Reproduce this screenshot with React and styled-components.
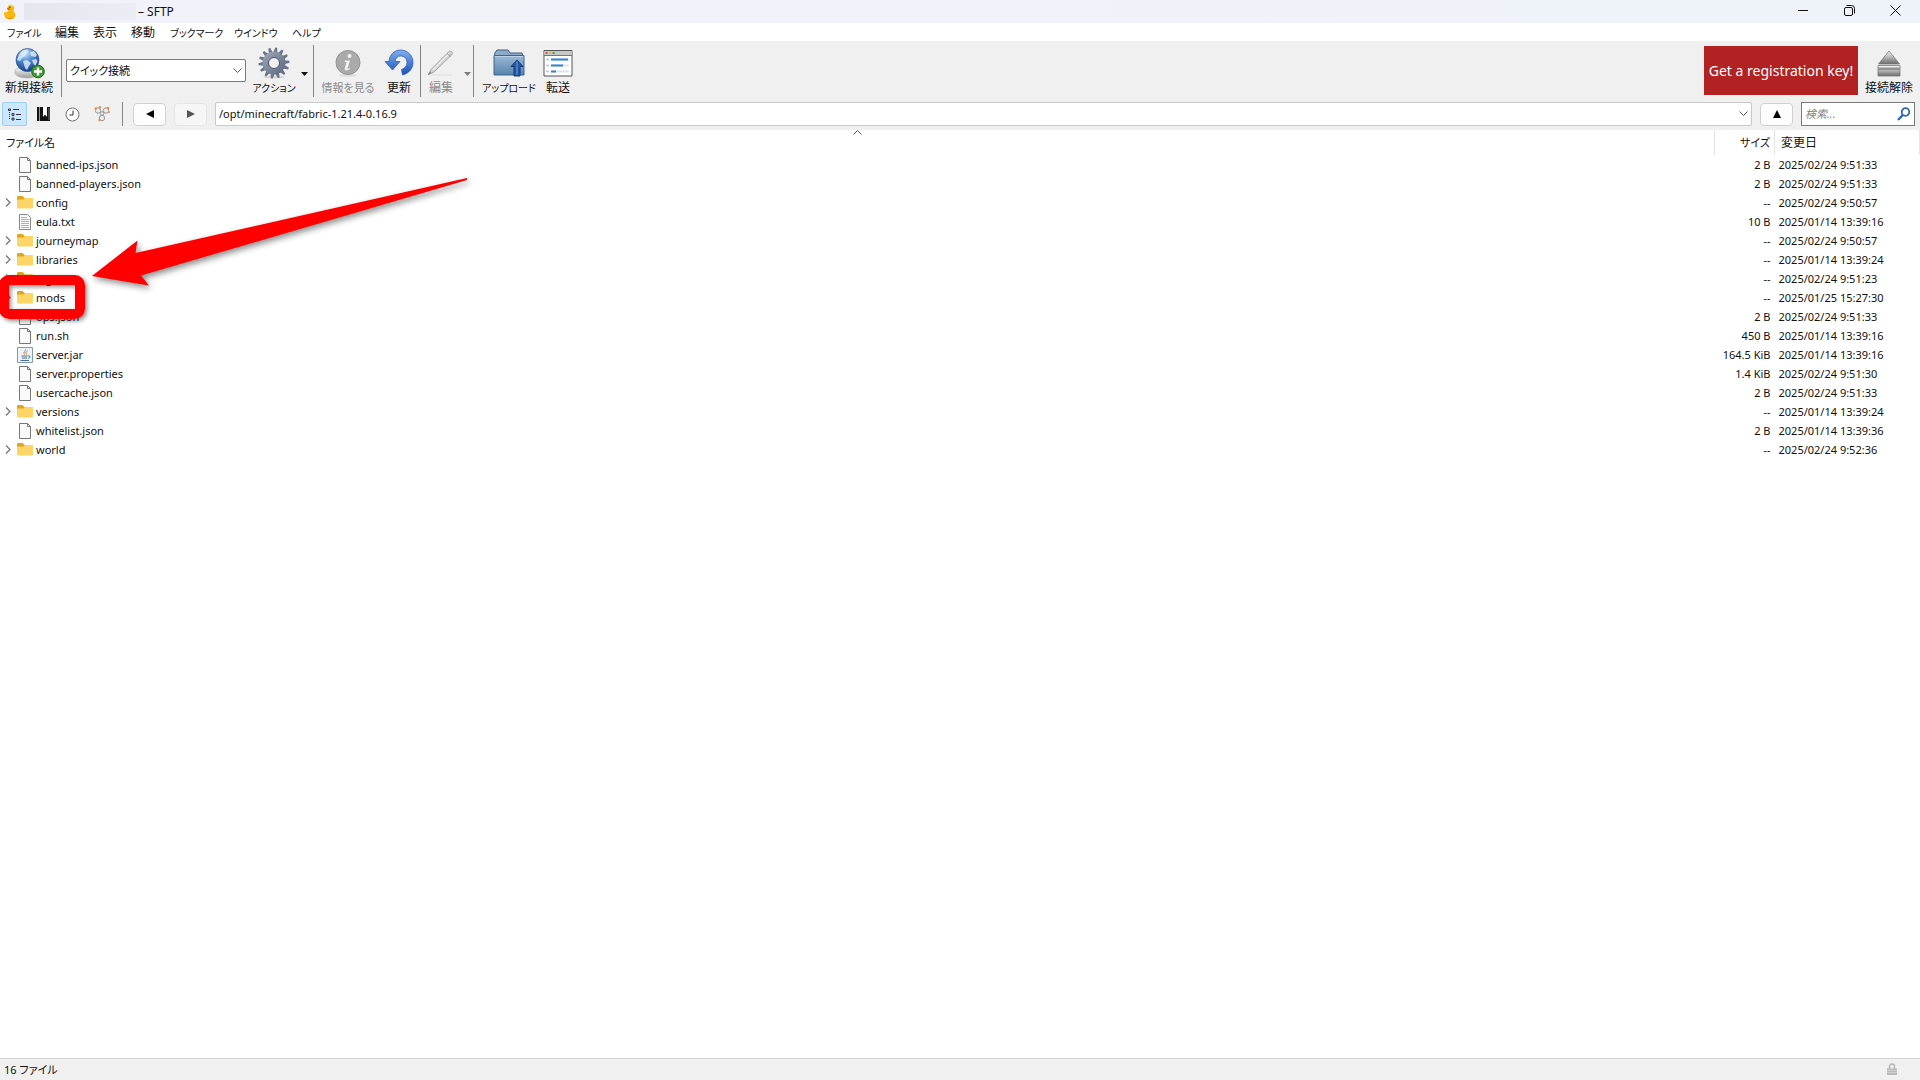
import React from "react";
import styled, { createGlobalStyle } from "styled-components";

const Global = createGlobalStyle`
  *, *::before, *::after { box-sizing: border-box; }
  body { margin: 0; background: #fff; color: #111; }
  body, button, select, input {
    font-family: "Noto Sans", "Noto Sans CJK JP", sans-serif;
    font-size: 12px;
    line-height: 16px;
    font-feature-settings: "palt";
  }
  button, select, input { margin: 0; color: inherit; }
  svg { display: block; flex: none; }
`;

const Window = styled.div`
  display: flex;
  flex-direction: column;
  min-height: 100vh;
`;

const TitleBar = styled.header`
  display: flex;
  align-items: center;
  height: 23px;
  padding: 0 2px 0 4px;
  background: linear-gradient(90deg, #f2f3fa, #eef3f9);
`;
const HiddenHost = styled.span`
  width: 112px;
  height: 17px;
  margin: 0 2px 0 8px;
  background: linear-gradient(90deg, #e5e6ee, #ebedf5);
`;
const Title = styled.h1`
  flex: 1;
  margin: 0;
  font-size: 12px;
  font-weight: 400;
`;
const WindowButton = styled.button`
  display: grid;
  place-items: center;
  width: 46px;
  height: 20px;
  padding: 0;
  border: 0;
  background: none;
  align-self: flex-start;
`;

const MenuBar = styled.nav`
  display: grid;
  grid-template-columns: 48px 38px 38px 39px 64px 58px 48px;
  height: 18px;
  padding: 2px 0 0 7px;
  background: #fff;
`;
const MenuItem = styled.button`
  padding: 0;
  border: 0;
  background: none;
  text-align: left;
  white-space: nowrap;
  font-size: ${(p) => (p.$kana ? "10px" : "12px")};
`;

const Gap = styled.span`
  width: 4px;
  flex: none;
`;
const Spacer = styled.span`
  flex: 1;
`;
const Divider = styled.span`
  width: 1px;
  height: ${(p) => p.$height}px;
  background: #858585;
  flex: none;
`;

const Toolbar = styled.div`
  display: flex;
  align-items: center;
  height: 61px;
  padding: 0 4px 2px 1px;
  background: #f0f0f0;
`;
const Tool = styled.button`
  display: grid;
  grid-template-rows: 34px 16px;
  justify-items: center;
  align-items: center;
  width: ${(p) => p.$width}px;
  padding: 0;
  border: 0;
  background: none;
  white-space: nowrap;
  font-size: ${(p) => p.$size || 12}px;
  &:disabled { color: #8b8b8b; }
`;
const CaretButton = styled.button`
  width: ${(p) => p.$width}px;
  padding: 6px 0 0;
  border: 0;
  background: none;
  display: grid;
  place-items: center;
  &:disabled { color: #7d7d7d; }
`;
const Register = styled.button`
  width: 154px;
  height: 49px;
  padding: 0;
  border: 0;
  margin-right: 4px;
  background: #b22222;
  color: #fff;
  font-size: 14px;
  white-space: nowrap;
`;

const Combo = styled.div`
  display: grid;
  align-items: center;
  flex: ${(p) => (p.$grow ? "1" : "0 0 180px")};
  min-width: 0;
  height: ${(p) => (p.$grow ? "24px" : "23px")};
  margin: ${(p) => (p.$grow ? "0 8px" : "0 2px 0 4px")};
  select, svg { grid-area: 1 / 1; }
  svg { justify-self: end; margin-right: 4px; pointer-events: none; }
`;
const Select = styled.select`
  appearance: none;
  width: 100%;
  height: 100%;
  padding: 0 18px 0 3px;
  border: 1px solid ${(p) => p.$edge};
  border-radius: 2px;
  background: #fff;
  font-size: 11px;
`;

const NavBar = styled.div`
  display: flex;
  align-items: center;
  height: 28px;
  padding: 0 5px 4px 2px;
  background: #f0f0f0;
`;
const ViewButton = styled.button`
  display: grid;
  place-items: center;
  width: 25px;
  height: 24px;
  padding: 0;
  margin-right: 4px;
  border: 1px solid ${(p) => (p.$on ? "#99d1ff" : "transparent")};
  border-radius: 2px;
  background: ${(p) => (p.$on ? "#cce8ff" : "none")};
`;
const HistoryGroup = styled.div`
  display: flex;
  margin-left: 10px;
`;
const HistoryButton = styled.button`
  display: grid;
  place-items: center;
  width: 33px;
  height: 23px;
  padding: 0;
  border: 1px solid ${(p) => (p.disabled ? "#e6e6e6" : "#d0d0d0")};
  border-radius: 4px;
  background: ${(p) => (p.disabled ? "#f6f6f6" : "#fdfdfd")};
  color: #000;
  flex: none;
  &:disabled { color: #555; }
  & + & { margin-left: 8px; }
`;
const Search = styled.label`
  display: flex;
  align-items: center;
  width: 114px;
  height: 24px;
  margin-left: 8px;
  padding: 0 3px;
  border: 1px solid #7a7a7a;
  background: #fff;
  flex: none;
`;
const SearchInput = styled.input`
  flex: 1;
  min-width: 0;
  padding: 0;
  border: 0;
  outline: 0;
  background: none;
  font-size: 11px;
  &::placeholder { color: #858585; font-style: italic; opacity: 1; }
`;

const Browser = styled.main`
  position: relative;
  flex: 1;
  overflow: hidden;
  background: #fff;
`;
const Files = styled.table`
  width: 100%;
  border-collapse: collapse;
  table-layout: fixed;
`;
const Head = styled.th`
  width: ${(p) => p.$width};
  height: 25px;
  padding: ${(p) => p.$pad};
  border-right: 1px solid #e4e4e4;
  font-weight: 400;
  font-size: ${(p) => (p.$kana ? "11px" : "12px")};
  text-align: ${(p) => p.$align || "left"};
`;
const Cell = styled.td`
  height: 19px;
  padding: ${(p) => p.$pad};
  font-size: 11px;
  line-height: 19px;
  white-space: nowrap;
  text-align: ${(p) => p.$align || "left"};
`;
const Entry = styled.div`
  display: grid;
  grid-template-columns: 16px 17px 1fr;
  align-items: center;
  column-gap: 1px;
  height: 19px;
  span { padding-left: 1px; }
`;
const Expander = styled.button`
  grid-column: 1;
  display: grid;
  width: 16px;
  height: 16px;
  place-items: center start;
  padding: 0 0 0 5px;
  border: 0;
  background: none;
`;
const SortMark = styled.svg`
  position: absolute;
  top: 0;
  left: calc((100% - 215px) / 2);
`;

const Arrow = styled.svg`
  position: absolute;
  left: 80px;
  top: 30px;
  filter: drop-shadow(2px 3px 3px rgba(0, 0, 0, 0.45));
  pointer-events: none;
`;
const Highlight = styled.div`
  position: absolute;
  left: -1px;
  top: 145px;
  width: 86px;
  height: 44px;
  border: 10px solid #fe0000;
  border-radius: 10px;
  box-shadow: 2px 2px 4px rgba(0, 0, 0, 0.45), inset 2px 2px 4px rgba(0, 0, 0, 0.45);
  pointer-events: none;
`;

const StatusBar = styled.footer`
  display: flex;
  align-items: center;
  justify-content: space-between;
  height: 22px;
  padding: 0 22px 0 4px;
  border-top: 1px solid #d5d5d5;
  background: #f0f0f0;
  font-size: 11px;
`;

const Duck = () => (
  <svg width="12" height="16" viewBox="0 0 12 16">
    <path d="M.3 7.500C0 10 .2 12.500 1.500 14c1.800 1.800 6.500 1.800 8.500.2 2-1.700 2-4.500.3-6-.9-.8-1-1.400-.5-2.300C11.200 3.300 9.500.4 6.900.4 4.700.4 3.300 2.200 3.800 4.300c.3 1.200.8 1.900.3 3-.8 1.300-2.600 1.400-3.800.2z" fill="#f7b90f" />
    <path d="M1 12.500c1.500 2 5.500 2.200 8 .2-.8 2.800-6 3.300-8-.2z" fill="#d98d07" />
    <path d="M6 1.300c1.500-.6 3 .2 3.300 1.500-1-.6-2.200-.7-3.300-.3z" fill="#ffe87a" />
    <path d="M3.900 3.600l-1 1.400 1.200.9 2.400-.6z" fill="#e4571b" />
    <circle cx="6" cy="3.300" r=".7" fill="#222" />
  </svg>
);

const Globe = () => (
  <svg width="32" height="32" viewBox="0 0 32 32">
    <defs>
      <radialGradient id="globe" cx=".4" cy=".2" r=".8">
        <stop offset="0" stopColor="#d7e9fb" />
        <stop offset=".4" stopColor="#5b95d8" />
        <stop offset="1" stopColor="#123f8c" />
      </radialGradient>
      <linearGradient id="base" x2="0" y2="1">
        <stop offset="0" stopColor="#fff" />
        <stop offset="1" stopColor="#9c9c9c" />
      </linearGradient>
    </defs>
    <path d="M3 22c-4 5 2 9 11 9 8 0 14-3 12-7l-5-4-14 0z" fill="url(#base)" stroke="#aaa" strokeWidth=".6" />
    <circle cx="14.500" cy="13" r="11.500" fill="url(#globe)" stroke="#31548c" strokeWidth=".7" />
    <path d="M6 8l3-4 5-1.500 2 2-3 1.500-1 3-3 2-2 3-3-1zM17 5l4-1 3 4-2 2-4-1zM10 14l4-1 4 3-2 3-2 4-2-2zM19 13l4-1 1.500 2-2 5-2-2z" fill="#e4effb" opacity=".8" />
    <circle cx="25" cy="24.500" r="6.300" fill="#3f9a35" stroke="#226a1c" />
    <path d="M25 20.500v8M21 24.500h8" stroke="#fff" strokeWidth="2.400" />
  </svg>
);

const Gear = () => (
  <svg width="32" height="32" viewBox="0 0 32 32">
    <defs>
      <linearGradient id="gear" x2="1" y2="1">
        <stop offset="0" stopColor="#a0a9b9" />
        <stop offset="1" stopColor="#5b667c" />
      </linearGradient>
    </defs>
    <ellipse cx="16" cy="30" rx="11" ry="1.500" fill="#d6d6d6" />
    {Array.from({ length: 14 }, (_, i) => (
      <path key={i} d="M14 6L15 .5h2L18 6z" transform={`rotate(${(i * 360) / 14 + 8} 16 16)`} fill="#69748a" />
    ))}
    <path fillRule="evenodd" d="M16 4.500a11.500 11.500 0 100 23 11.500 11.500 0 000-23zm0 6a5.500 5.500 0 110 11 5.500 5.500 0 010-11z" fill="url(#gear)" />
    <circle cx="16" cy="16" r="5.500" fill="none" stroke="#48536a" strokeWidth="1" />
  </svg>
);

const Info = () => (
  <svg width="28" height="28" viewBox="0 0 28 28">
    <ellipse cx="14" cy="26.500" rx="9" ry="1.300" fill="#ddd" />
    <circle cx="14" cy="13.500" r="12" fill="#aaa" stroke="#929292" />
    <circle cx="15.500" cy="7" r="2" fill="#f1f1f1" />
    <path d="M11 11.500h5l-2.300 7.500c-.2 1 .8.800 2.300-.3v1c-2 2-5.800 2.500-5.300-.2l1.800-6.200-2-.3z" fill="#f1f1f1" />
  </svg>
);

const Refresh = () => (
  <svg width="30" height="28" viewBox="0 0 30 28">
    <defs>
      <linearGradient id="refresh" x2="0" y2="1">
        <stop offset="0" stopColor="#7fb0f3" />
        <stop offset="1" stopColor="#1a4fb4" />
      </linearGradient>
    </defs>
    <path d="M1 12.500h4C5.500 5.500 10.500 1 16.500 1 23.500 1 29 6.500 29 13.500c0 6-4 11-10.500 12.500l-1-5.500c3.500-1 5.500-3.700 5.500-7 0-4-2.800-6.500-6.500-6.500-3 0-5 2-5.500 5.500h5L8.500 21z" fill="url(#refresh)" stroke="#2b5fb9" strokeWidth=".8" />
  </svg>
);

const Pencil = () => (
  <svg width="28" height="28" viewBox="0 0 28 28">
    <path d="M3 26h22" stroke="#ddd" />
    <path d="M1.500 25.500l2.500-5L22 2.500c1.500-1.500 4.500 1 3 3L7 23z" fill="#d0d0d0" stroke="#a6a6a6" />
    <path d="M6 21L22 4.500" stroke="#f0f0f0" strokeWidth="1.300" />
    <path d="M1.500 25.500l1.200-2.400 1.200 1z" stroke="#888" fill="#888" />
    <path d="M20 4.500l3.300 3" stroke="#999" />
  </svg>
);

const Upload = () => (
  <svg width="32" height="28" viewBox="0 0 32 28">
    <defs>
      <linearGradient id="folderBlue" x2="0" y2="1">
        <stop offset="0" stopColor="#9ab9d5" />
        <stop offset="1" stopColor="#5883ad" />
      </linearGradient>
    </defs>
    <path d="M1.500 8L2 3.500 4 1h11l2 3h12l1 4z" fill="#8eacc9" stroke="#3d5e80" />
    <path d="M1 6.500h30V26H1z" fill="url(#folderBlue)" stroke="#41658a" />
    <path d="M2 7.500h28" stroke="#bdd3e7" />
    <path d="M24 11l6 6.500h-3V27h-6v-9.500h-3z" fill="#2458a6" stroke="#153b78" />
    <path d="M24 12.500v13" stroke="#6f9ddb" />
  </svg>
);

const Transfer = () => (
  <svg width="30" height="28" viewBox="0 0 30 28">
    <path d="M1 1.500h28V27H1z" fill="#fff" stroke="#555" />
    <path d="M1.500 2h27v4.500h-27z" fill="#c7c7c7" />
    <path d="M1 6.500h28" stroke="#777" />
    <path d="M2.500 3h2v2h-2z" fill="#e2574c" />
    <path d="M6 3h2v2H6z" fill="#e7b43c" />
    <path d="M9.500 3h2v2h-2z" fill="#25a86b" />
    <path d="M3 10.500h3M3 16.500h3M3 22.500h3" stroke="#b9c4d0" strokeWidth="1.500" />
    <path d="M8 10.500h18M8 16.500h18M8 22.500h18" stroke="#dce3ea" strokeWidth="2" />
    <path d="M8 10.500h17M8 16.500h12M8 22.500h5" stroke="#2e86d6" strokeWidth="2" />
  </svg>
);

const Eject = () => (
  <svg width="24" height="28" viewBox="0 0 24 28">
    <defs>
      <linearGradient id="eject" x2="0" y2="1">
        <stop offset="0" stopColor="#fafafa" />
        <stop offset="1" stopColor="#6a6a6a" />
      </linearGradient>
    </defs>
    <path d="M12 2L22.500 15h-21z" fill="url(#eject)" stroke="#777" strokeWidth=".8" />
    <path d="M1 16.500h22V27H1z" fill="url(#eject)" stroke="#777" strokeWidth=".8" />
    <path d="M1.500 18.500h21v2.500h-21z" fill="#6c6c6c" opacity=".6" />
  </svg>
);

const Caret = () => (
  <svg width="7" height="4" viewBox="0 0 7 4"><path d="M0 0h7L3.500 4z" fill="currentColor" /></svg>
);
const Chevron = () => (
  <svg width="9" height="6" viewBox="0 0 9 6"><path d="M.5.5l4 4 4-4" fill="none" stroke="#555" /></svg>
);

const Outline = () => (
  <svg width="14" height="13" viewBox="0 0 14 13" fill="none" stroke="#333">
    <path d="M.5 1h2v1.500h-2zM4 5.500h2v2H4zM4 10h2v2H4zM5 1.500h6M8 6.500h5M8 11.500h5" />
    <path d="M1.500 4v8" strokeDasharray="1 1" />
  </svg>
);
const Book = () => (
  <svg width="13" height="14" viewBox="0 0 13 14">
    <path d="M0 0h13v14H0z" fill="#111" />
    <path d="M2.500 0v14" stroke="#999" />
    <path d="M6 0h4v10L8 7.500 6 10z" fill="#fff" />
    <path d="M12 1v12" stroke="#777" />
  </svg>
);
const Clock = () => (
  <svg width="15" height="15" viewBox="0 0 15 15">
    <circle cx="7.500" cy="7.500" r="6.500" fill="#fff" stroke="#707070" />
    <path d="M8 3.500v4.500H4.500" fill="none" stroke="#333" />
  </svg>
);
const Bonjour = () => (
  <svg width="16" height="16" viewBox="0 0 16 16">
    <g fill="#ececec" stroke="#999" strokeWidth="1">
      <circle cx="4" cy="4.500" r="2.700" /><circle cx="12" cy="4.500" r="2.700" /><circle cx="8" cy="12" r="2.700" />
      <circle cx="8" cy="7.500" r="1.800" />
    </g>
    <g fill="#f08a4b">
      <circle cx="1.800" cy="2.500" r="1.300" /><circle cx="6" cy="1.300" r="1.200" /><circle cx="14" cy="2" r="1.300" />
      <circle cx="15" cy="6" r="1" /><circle cx="5.500" cy="14" r="1.200" />
    </g>
  </svg>
);
const Magnifier = () => (
  <svg width="14" height="14" viewBox="0 0 14 14" fill="none" stroke="#2b68b4">
    <circle cx="8.500" cy="5" r="3.800" strokeWidth="1.800" />
    <path d="M5.800 8L1 13" strokeWidth="2.400" />
  </svg>
);

const icons = {
  folder: (
    <svg width="16" height="14" viewBox="0 0 16 14">
      <path d="M0 1.500C0 .5.500 0 1.500 0h4L7.500 2H15c.7 0 1 .4 1 1v4H0z" fill="#e2a41c" />
      <path d="M0 4.500c0-.6.4-1 1-1h5.500L8 2h7c.7 0 1 .4 1 1v8.500c0 .7-.4 1-1 1H1c-.6 0-1-.3-1-1z" fill="#fbd565" />
    </svg>
  ),
  file: (
    <svg width="16" height="16" viewBox="0 0 16 16">
      <path d="M2.500.5h8l3 3v12h-11z" fill="#fafafa" stroke="#777" />
      <path d="M10.500.5v3h3" fill="none" stroke="#777" />
    </svg>
  ),
  text: (
    <svg width="16" height="16" viewBox="0 0 16 16">
      <path d="M2.500.5h8l3 3v12h-11z" fill="#fafafa" stroke="#888" />
      <path d="M4 3.500h6M4 5.500h8M4 7.500h8M4 9.500h8M4 11.500h8M4 13.500h8" stroke="#b0b0b0" />
    </svg>
  ),
  jar: (
    <svg width="16" height="16" viewBox="0 0 16 16">
      <path d="M.5.5h15v15H.5z" fill="#edf3f8" stroke="#7e9bb5" />
      <path d="M8.500 2c1 2-3 3-1 5.500M10.500 4c-2.500 1.500-1.500 2-1 3.500" fill="none" stroke="#e0702a" />
      <path d="M4.500 9h6M5 11h5M3.500 13.500h8.500M11 9c3-.5 2.500 2 .3 2.300" fill="none" stroke="#476f97" />
    </svg>
  ),
};

const files = [
  ["file", "banned-ips.json", "2 B", "2025/02/24 9:51:33"],
  ["file", "banned-players.json", "2 B", "2025/02/24 9:51:33"],
  ["folder", "config", "--", "2025/02/24 9:50:57"],
  ["text", "eula.txt", "10 B", "2025/01/14 13:39:16"],
  ["folder", "journeymap", "--", "2025/02/24 9:50:57"],
  ["folder", "libraries", "--", "2025/01/14 13:39:24"],
  ["folder", "logs", "--", "2025/02/24 9:51:23"],
  ["folder", "mods", "--", "2025/01/25 15:27:30"],
  ["file", "ops.json", "2 B", "2025/02/24 9:51:33"],
  ["file", "run.sh", "450 B", "2025/01/14 13:39:16"],
  ["jar", "server.jar", "164.5 KiB", "2025/01/14 13:39:16"],
  ["file", "server.properties", "1.4 KiB", "2025/02/24 9:51:30"],
  ["file", "usercache.json", "2 B", "2025/02/24 9:51:33"],
  ["folder", "versions", "--", "2025/01/14 13:39:24"],
  ["file", "whitelist.json", "2 B", "2025/01/14 13:39:36"],
  ["folder", "world", "--", "2025/02/24 9:52:36"],
];

const menus = [
  ["ファイル", true], ["編集", false], ["表示", false], ["移動", false],
  ["ブックマーク", true], ["ウインドウ", true], ["ヘルプ", true],
];

export default function App() {
  return (
    <Window>
      <Global />
      <TitleBar>
        <Duck />
        <HiddenHost />
        <Title>– SFTP</Title>
        <WindowButton aria-label="最小化">
          <svg width="10" height="10" viewBox="0 0 10 10"><path d="M0 5.500h10" stroke="#111" /></svg>
        </WindowButton>
        <WindowButton aria-label="元に戻す">
          <svg width="11" height="11" viewBox="0 0 11 11" fill="none" stroke="#111">
            <rect x=".5" y="2.500" width="8" height="8" rx="1.500" />
            <path d="M2.500.5h5a3 3 0 013 3v5" />
          </svg>
        </WindowButton>
        <WindowButton aria-label="閉じる">
          <svg width="11" height="11" viewBox="0 0 11 11"><path d="M.5.5l10 10M10.500.5l-10 10" stroke="#111" /></svg>
        </WindowButton>
      </TitleBar>

      <MenuBar>
        {menus.map(([name, kana]) => (
          <MenuItem key={name} $kana={kana}>{name}</MenuItem>
        ))}
      </MenuBar>

      <Toolbar>
        <Tool $width={56}><Globe />新規接続</Tool>
        <Gap />
        <Divider $height={52} />
        <Combo>
          <Select $edge="#7a7a7a" aria-label="クイック接続"><option>クイック接続</option></Select>
          <Chevron />
        </Combo>
        <Tool $width={52} $size={10}><Gear />アクション</Tool>
        <CaretButton $width={9} aria-label="アクションのメニュー"><Caret /></CaretButton>
        <Gap />
        <Divider $height={52} />
        <Gap />
        <Tool $width={60} $size={11} disabled><Info />情報を見る</Tool>
        <Tool $width={42}><Refresh />更新</Tool>
        <Divider $height={52} />
        <Tool $width={40} disabled><Pencil />編集</Tool>
        <CaretButton $width={12} disabled aria-label="編集のメニュー"><Caret /></CaretButton>
        <Divider $height={52} />
        <Gap />
        <Tool $width={62} $size={10}><Upload />アップロード</Tool>
        <Tool $width={36}><Transfer />転送</Tool>
        <Spacer />
        <Register>Get a registration key!</Register>
        <Tool $width={54}><Eject />接続解除</Tool>
      </Toolbar>

      <NavBar>
        <ViewButton $on aria-label="アウトライン"><Outline /></ViewButton>
        <ViewButton aria-label="ブックマーク"><Book /></ViewButton>
        <ViewButton aria-label="履歴"><Clock /></ViewButton>
        <ViewButton aria-label="Bonjour"><Bonjour /></ViewButton>
        <Gap />
        <Divider $height={24} />
        <HistoryGroup>
          <HistoryButton aria-label="戻る">
            <svg width="8" height="8" viewBox="0 0 8 8"><path d="M8 0v8L0 4z" fill="currentColor" /></svg>
          </HistoryButton>
          <HistoryButton aria-label="進む" disabled>
            <svg width="8" height="8" viewBox="0 0 8 8"><path d="M0 0v8l8-4z" fill="currentColor" /></svg>
          </HistoryButton>
        </HistoryGroup>
        <Combo $grow>
          <Select $edge="#c8c8c8" aria-label="パス"><option>/opt/minecraft/fabric-1.21.4-0.16.9</option></Select>
          <Chevron />
        </Combo>
        <HistoryButton aria-label="上へ">
          <svg width="8" height="8" viewBox="0 0 8 8"><path d="M4 0l4 8H0z" fill="currentColor" /></svg>
        </HistoryButton>
        <Search>
          <SearchInput type="text" placeholder="検索..." aria-label="検索" />
          <Magnifier />
        </Search>
      </NavBar>

      <Browser>
        <SortMark width="9" height="5" viewBox="0 0 9 5"><path d="M.5 4.500l4-4 4 4" fill="none" stroke="#555" /></SortMark>
        <Files>
          <thead>
            <tr>
              <Head $pad="0 6px" $kana>ファイル名</Head>
              <Head $width="60px" $pad="0 4px" $align="right" $kana>サイズ</Head>
              <Head $width="145px" $pad="0 6px">変更日</Head>
            </tr>
          </thead>
          <tbody>
            {files.map(([kind, name, size, date]) => (
              <tr key={name}>
                <Cell $pad="0">
                  <Entry>
                    {kind === "folder" ? (
                      <Expander aria-label={name}>
                        <svg width="6" height="9" viewBox="0 0 6 9"><path d="M1 .5l4 4-4 4" fill="none" stroke="#777" strokeWidth="1.300" /></svg>
                      </Expander>
                    ) : <i />}
                    {icons[kind]}
                    <span>{name}</span>
                  </Entry>
                </Cell>
                <Cell $pad="0 4px 0 0" $align="right">{size}</Cell>
                <Cell $pad="0 0 0 4px">{date}</Cell>
              </tr>
            ))}
          </tbody>
        </Files>
        <Arrow width="400" height="140" viewBox="80 160 400 140">
          <path d="M92 276l45.500-35.500-2 12.500L467 178v2L141 275.500l8 10z" fill="#fe0000" />
        </Arrow>
        <Highlight />
      </Browser>

      <StatusBar>
        <span>16 ファイル</span>
        <svg width="12" height="13" viewBox="0 0 12 13">
          <path d="M3.500 6V3.500a2.500 2.500 0 015 0V6" fill="none" stroke="#b5b5b5" strokeWidth="1.500" />
          <path d="M1 5.500h10V12H1z" fill="#b9b9b9" />
          <path d="M1 7.500h10M1 9.500h10" stroke="#cfcfcf" />
        </svg>
      </StatusBar>
    </Window>
  );
}
